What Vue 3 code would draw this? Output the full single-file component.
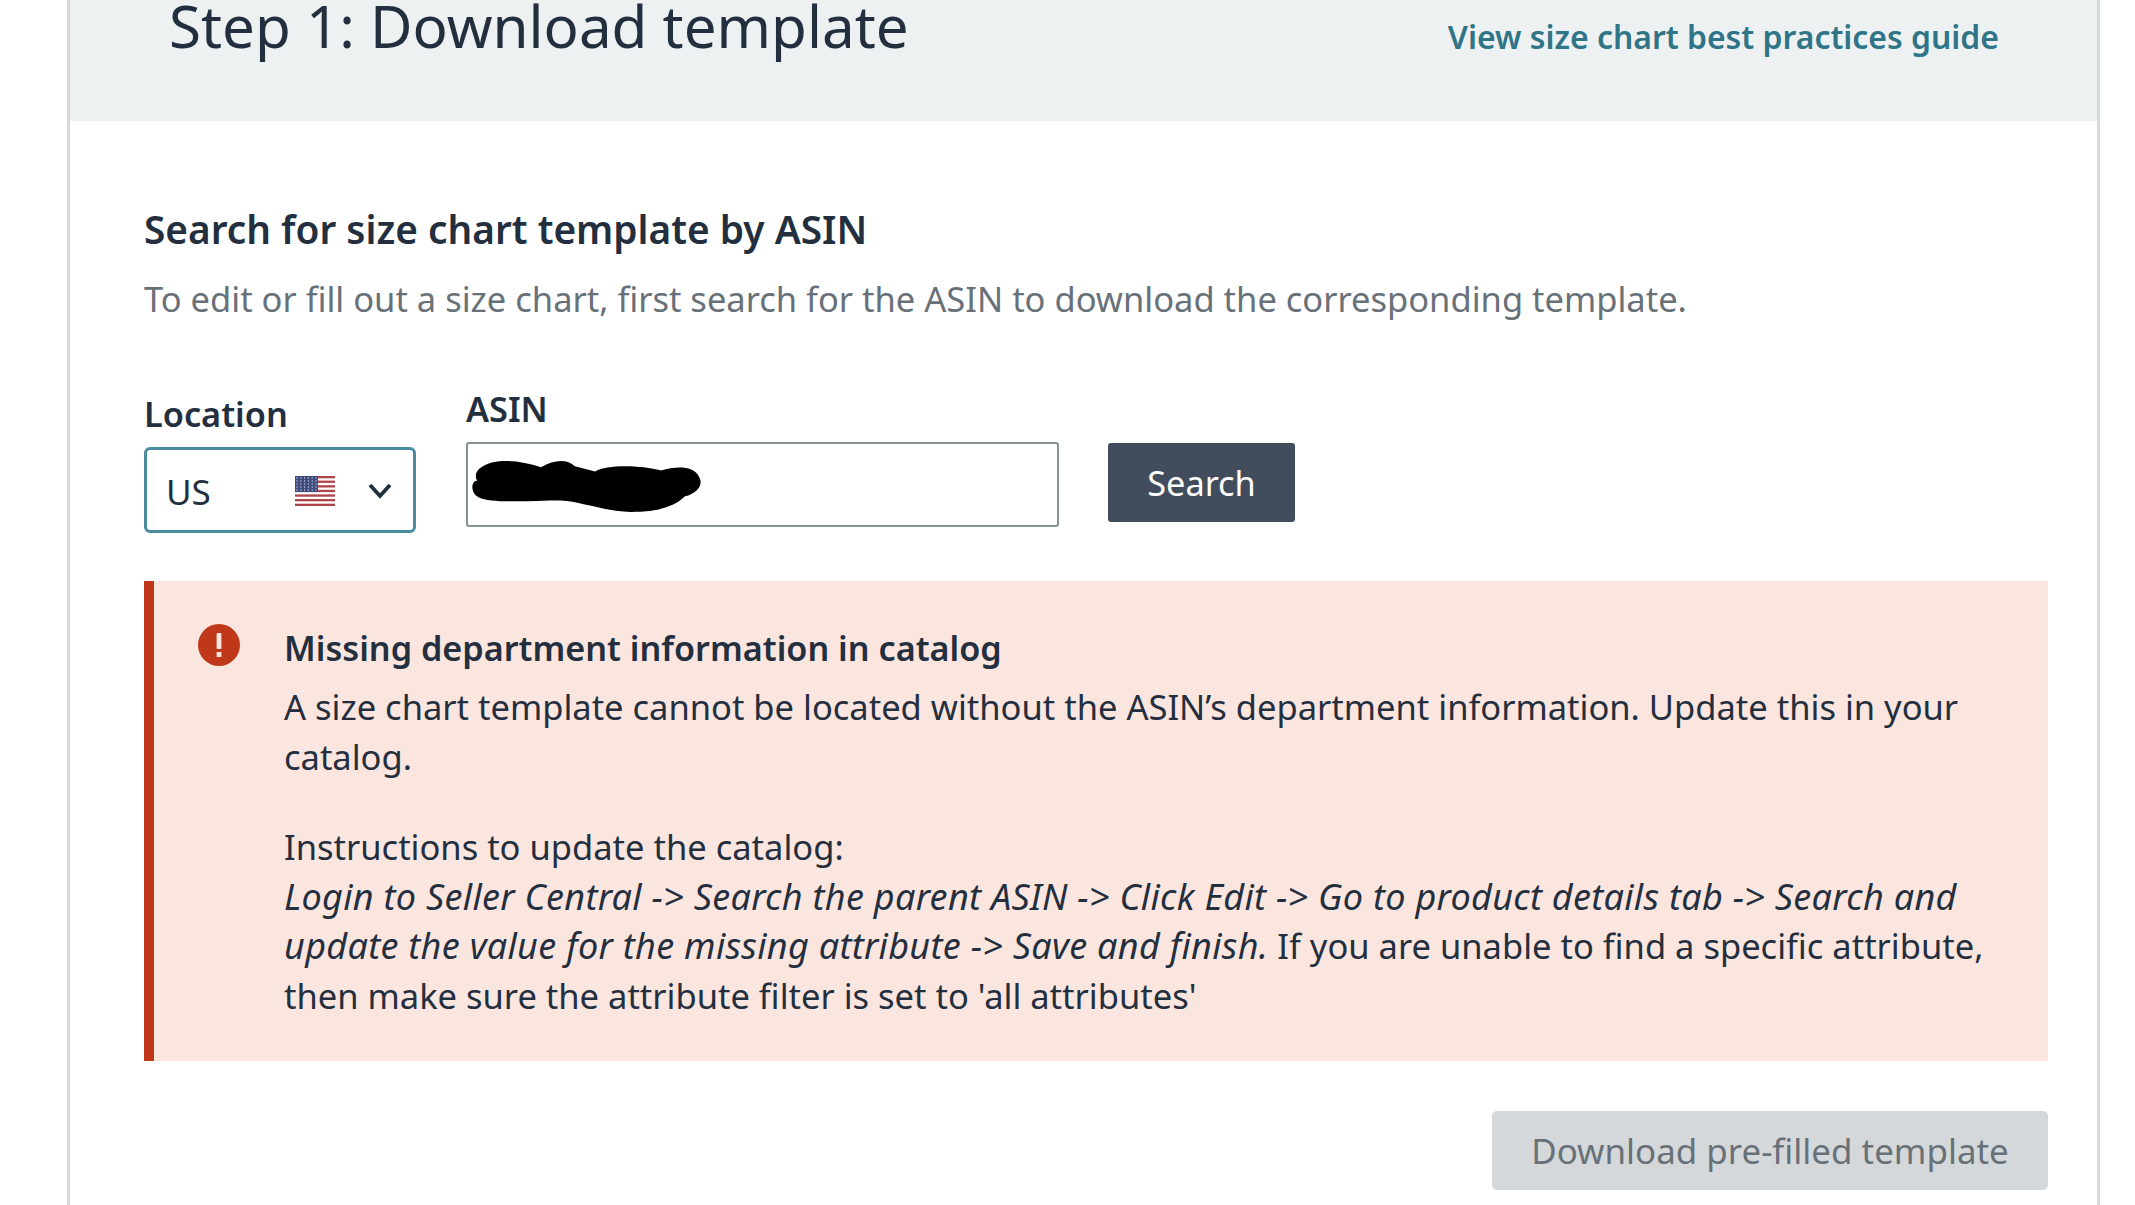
<script setup>
const lines = [
  'A size chart template cannot be located without the ASIN’s department information. Update this in your catalog.'
]
</script>

<template>
  <div class="page">
    <section class="card">
      <header class="head">
        <h1 class="title">Step 1: Download template</h1>
        <a class="guide">View size chart best practices guide</a>
      </header>
      <div class="body">
        <h2 class="sub">Search for size chart template by ASIN</h2>
        <p class="desc">To edit or fill out a size chart, first search for the ASIN to download the corresponding template.</p>
        <div class="form">
          <div class="field loc">
            <label>Location</label>
            <div class="select">
              <span class="val">US</span>
              <svg class="flag" width="40" height="30" viewBox="0 0 40 30">
                <rect width="40" height="30" fill="#fff"/>
                <g fill="#b0444c">
                  <rect y="0" width="40" height="2.3"/><rect y="4.6" width="40" height="2.3"/><rect y="9.2" width="40" height="2.3"/><rect y="13.8" width="40" height="2.3"/><rect y="18.4" width="40" height="2.3"/><rect y="23" width="40" height="2.3"/><rect y="27.7" width="40" height="2.3"/>
                </g>
                <rect width="23" height="16" fill="#3f4a7d"/>
                <g fill="#c9cde0"><circle v-for="n in 30" :key="n" :cx="2 + ((n-1)%6)*3.8" :cy="2 + Math.floor((n-1)/6)*3" r=".7"/></g>
              </svg>
              <svg class="chev" width="26" height="18" viewBox="0 0 26 18"><path d="M3 3l10 11L23 3" fill="none" stroke="#232f3e" stroke-width="3.8"/></svg>
            </div>
          </div>
          <div class="field asin">
            <label>ASIN</label>
            <div class="input">
              <svg class="blob" width="232" height="56" viewBox="0 0 232 54" preserveAspectRatio="none"><path d="M12 8C24 0 50 2 70 9C84 1 96 1 104 8L124 13C136 6 170 7 190 12C205 8 222 7 228 18C233 26 226 34 214 37C204 46 190 52 160 52C136 52 110 42 90 41C60 41 20 44 8 38C-1 34 0 22 6 22C3 16 6 11 12 8Z" fill="#000"/></svg>
            </div>
          </div>
          <button class="search">Search</button>
        </div>
        <div class="alert">
          <svg class="ico" width="42" height="42" viewBox="0 0 42 42"><circle cx="21" cy="21" r="21" fill="#c0381a"/><rect x="18.6" y="9" width="4.8" height="16" rx="1" fill="#fbe5df"/><rect x="18.6" y="28" width="4.8" height="5" fill="#fbe5df"/></svg>
          <div class="msg">
            <h3>Missing department information in catalog</h3>
            <p class="p1">{{ lines[0] }}</p>
            <p class="p2">Instructions to update the catalog:<br><em>Login to Seller Central -&gt; Search the parent ASIN -&gt; Click Edit -&gt; Go to product details tab -&gt; Search and update the value for the missing attribute -&gt; Save and finish.</em> If you are unable to find a specific attribute, then make sure the attribute filter is set to 'all attributes'</p>
          </div>
        </div>
        <div class="actions"><button class="dl">Download pre-filled template</button></div>
      </div>
    </section>
  </div>
</template>

<style>
html, body { margin: 0; background: #fff; }
</style>

<style scoped>
.page { height: 1205px; overflow: hidden; padding: 0 35px 0 67px; font-family: "Noto Sans", sans-serif; color: #232f3e; box-sizing: border-box; }
.card { border-left: 3px solid #d5d8db; border-right: 3px solid #d5d8db; height: 100%; }
.head { height: 121px; background: #eef1f2; display: flex; justify-content: space-between; padding: 0 98px 0 99px; }
.title { margin: -13px 0 0; font-size: 58.3px; font-weight: 400; line-height: 78px; color: #232f3e; white-space: nowrap; }
.guide { margin-top: 15px; font-size: 31.9px; font-weight: 600; line-height: 44px; color: #2f7587; white-space: nowrap; }
.body { padding: 0 49px 0 74px; }
.sub { margin: 82px 0 0; font-size: 38.8px; font-weight: 600; line-height: 52px; }
.desc { margin: 19px 0 0; font-size: 34.5px; line-height: 50px; color: #687078; }
.form { display: flex; margin-top: 63px; align-items: flex-start; }
.field label { display: block; font-size: 34.3px; font-weight: 600; line-height: 44px; }
.loc { width: 272px; margin-right: 50px; padding-top: 5px; }
.loc label { margin-bottom: 11px; }
.select { height: 86px; border: 3px solid #4a8da1; border-radius: 6px; box-sizing: border-box; display: flex; align-items: center; padding: 2px 20px 0 19px; }
.val { font-size: 35px; flex: 1; }
.flag { margin-right: 2px; }
.chev { margin-left: 30px; }
.asin { width: 593px; margin-right: 49px; }
.asin label { margin-bottom: 11px; }
.input { height: 85px; border: 2px solid #879096; border-radius: 3px; box-sizing: border-box; display: flex; align-items: center; padding: 3px 0 0 3px; }
.search { margin-top: 56px; width: 187px; height: 79px; border: 0; border-radius: 3px; background: #414d5c; color: #fff; font: 400 34.3px "Noto Sans", sans-serif; }
.alert { margin-top: 48px; min-height: 480px; box-sizing: border-box; background: #fbe5df; border-left: 10px solid #c0381a; display: flex; padding: 43px 40px 0 44px; }
.ico { flex: none; margin-right: 44px; }
.msg { font-size: 34.5px; line-height: 50px; }
.msg h3 { margin: -1px 0 9px; font-size: 34.2px; font-weight: 600; line-height: 50px; }
.msg p { margin: 0; }
.msg em { font-size: 36px; letter-spacing: .3px; }
.p2 { margin-top: 40px !important; line-height: 49.7px; }
.actions { display: flex; justify-content: flex-end; margin-top: 50px; }
.dl { width: 556px; height: 79px; border: 0; border-radius: 5px; background: #d5d8db; color: #687078; font: 400 34.9px "Noto Sans", sans-serif; }
</style>
